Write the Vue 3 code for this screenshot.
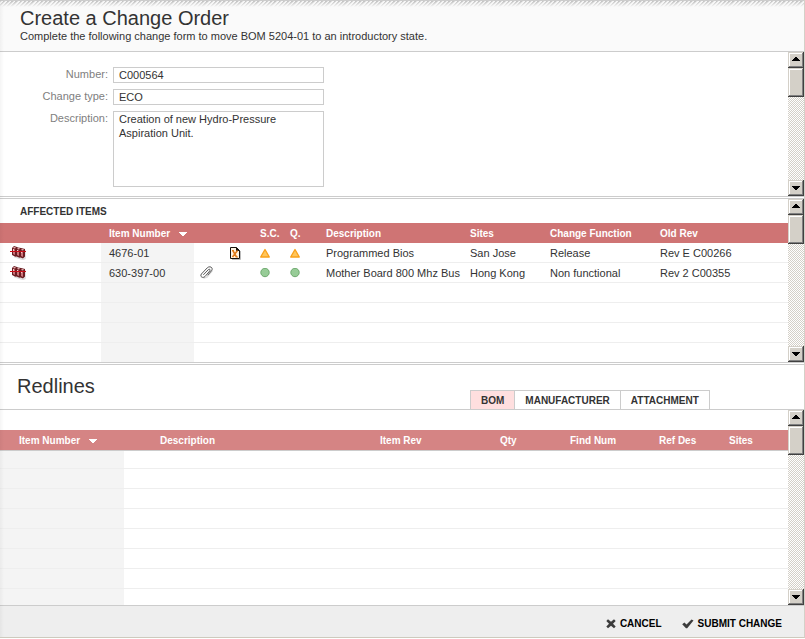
<script setup>
import { ref, h } from 'vue'

const number = ref('C000564')
const changeType = ref('ECO')
const description = ref('Creation of new Hydro-Pressure Aspiration Unit.')

const items = [
  { number: '4676-01', file: true, status: 'warn', description: 'Programmed Bios', site: 'San Jose', fn: 'Release', rev: 'Rev E C00266' },
  { number: '630-397-00', clip: true, status: 'ok', description: 'Mother Board 800 Mhz Bus', site: 'Hong Kong', fn: 'Non functional', rev: 'Rev 2 C00355' },
]
const tabs = ['BOM', 'MANUFACTURER', 'ATTACHMENT']
const activeTab = ref('BOM')

const Arrow = (props) =>
  h('svg', { width: 8, height: 4, viewBox: '0 0 8 4', 'shape-rendering': 'crispEdges', 'aria-hidden': 'true' }, [
    h('path', { d: props.up ? 'M3 0h2v1h1v1h1v1h1v1h-8v-1h1v-1h1v-1h1z' : 'M0 0h8v1h-1v1h-1v1h-1v1h-2v-1h-1v-1h-1v-1h-1z' }),
  ])
Arrow.props = { up: Boolean }

const StatusMark = (props) =>
  h('svg', { width: 10, height: 10, viewBox: '0 0 10 10', 'aria-hidden': 'true' }, [
    props.kind === 'warn'
      ? h('path', { d: 'M5 1.500L9.300 9H.7Z', fill: '#ffc65c', stroke: '#f9a11b', 'stroke-width': 1.3, 'stroke-linejoin': 'round' })
      : h('circle', { cx: 5, cy: 4.5, r: 4.2, fill: '#97cc97', stroke: '#6fa96f' }),
  ])
StatusMark.props = { kind: String }
</script>

<template>
  <main class="page">
    <header class="top">
      <h1>Create a Change Order</h1>
      <p>Complete the following change form to move BOM 5204-01 to an introductory state.</p>
    </header>

    <section class="panel">
      <form class="form" @submit.prevent>
        <label for="number">Number:</label>
        <input id="number" v-model="number" type="text">
        <label for="type">Change type:</label>
        <input id="type" v-model="changeType" type="text">
        <label for="desc">Description:</label>
        <textarea id="desc" v-model="description"></textarea>
      </form>
      <div class="scroll">
        <button type="button" aria-label="Scroll up"><Arrow up /></button>
        <div class="thumb"></div>
        <button type="button" class="down" aria-label="Scroll down"><Arrow /></button>
      </div>
    </section>

    <div class="divider"></div>

    <section class="panel">
      <div class="content">
        <h2 class="caption">AFFECTED ITEMS</h2>
        <table class="affected">
          <colgroup>
            <col class="a-kind"><col class="a-num"><col class="a-clip"><col class="a-file"><col class="a-sc"><col class="a-q">
            <col class="a-desc"><col class="a-site"><col class="a-fn"><col>
          </colgroup>
          <thead>
            <tr>
              <th></th>
              <th>Item Number <Arrow class="sort" /></th>
              <th></th>
              <th></th>
              <th>S.C.</th>
              <th>Q.</th>
              <th>Description</th>
              <th>Sites</th>
              <th>Change Function</th>
              <th>Old Rev</th>
            </tr>
          </thead>
          <tbody>
            <tr v-for="item in items" :key="item.number">
              <td class="kind">
                <svg width="17" height="15" viewBox="0 0 17 15" aria-hidden="true">
                  <path d="M4 11.500l9 3 2-1V5" fill="none" stroke="#ddd" stroke-width="1.500" />
                  <path d="M2 3l2-2 3 1 1 .5L11 3l4 1v7.500l-2 2-2.500-1-1 .3L6.500 11.500l-1 .3L2 10z" fill="#6b1d22" />
                  <path d="M3 4l2 .5V10l-2-1zM7 5l2 .5V11l-2-1zM11 6l2 .5V12l-2-1z" fill="#c9747a" />
                  <path d="M3 3l1-1 2 .5-1 1zM7 4l1-1 2 .5-1 1zM11 5l1-1 2 .5-1 1z" fill="#efb9b9" />
                  <path d="M3 4h1v2h-1zM7 5h1v1h-1zM11 7h1v1h-1z" fill="#f3caca" />
                  <path d="M0 6h16v1h-16z" fill="#c90d16" />
                </svg>
              </td>
              <td class="num">{{ item.number }}</td>
              <td class="clip">
                <svg v-if="item.clip" width="14" height="13" viewBox="0 0 14 13" fill="none" stroke-linecap="round" aria-hidden="true">
                  <path d="M4 12l3-1 5-6" stroke="#ddd" stroke-width="1.500" />
                  <path d="M3.600 8.600L8.400 3.600c1.200-1 2.300.1 1.400 1.300L5 10.500c-2.200 2.100-5.400.2-3.600-2.500L7.300 1.800c2.600-2.400 6.300-.1 4.300 2.800L8 8.900" stroke="#444" stroke-width=".9" />
                </svg>
              </td>
              <td>
                <svg v-if="item.file" width="13" height="14" viewBox="0 0 13 14" aria-hidden="true">
                  <path d="M3 13.500h8.500V5" fill="none" stroke="#bbb" />
                  <path d="M1.500 1.500h6l3 3v8h-9z" fill="#fff4e2" stroke="#17120b" />
                  <path d="M7 1v4h4l-4-4z" fill="#17120b" />
                  <path d="M3.800 4.500L7.500 11M8.500 4.500L3.500 11" stroke="#e07c1a" stroke-width="1.600" />
                  <path d="M3 4.500h2M7 11h2" stroke="#e07c1a" />
                </svg>
              </td>
              <td><StatusMark :kind="item.status" /></td>
              <td><StatusMark :kind="item.status" /></td>
              <td>{{ item.description }}</td>
              <td>{{ item.site }}</td>
              <td>{{ item.fn }}</td>
              <td>{{ item.rev }}</td>
            </tr>
            <tr v-for="n in 4" :key="n">
              <td></td>
              <td class="num"></td>
              <td v-for="c in 8" :key="c"></td>
            </tr>
          </tbody>
        </table>
      </div>
      <div class="scroll">
        <button type="button" aria-label="Scroll up"><Arrow up /></button>
        <div class="thumb"></div>
        <button type="button" class="down" aria-label="Scroll down"><Arrow /></button>
      </div>
    </section>

    <div class="divider"></div>

    <div class="redhead">
      <h2>Redlines</h2>
      <nav class="tabs">
        <button v-for="t in tabs" :key="t" type="button" :class="{ active: t === activeTab }" @click="activeTab = t">{{ t }}</button>
      </nav>
    </div>

    <section class="panel grow">
      <div class="content">
        <table class="redlines">
          <colgroup>
            <col class="r-num"><col class="r-desc"><col class="r-rev"><col class="r-qty"><col class="r-find"><col class="r-ref"><col>
          </colgroup>
          <thead>
            <tr>
              <th>Item Number <Arrow class="sort" /></th>
              <th class="desc">Description</th>
              <th>Item Rev</th>
              <th>Qty</th>
              <th>Find Num</th>
              <th>Ref Des</th>
              <th>Sites</th>
            </tr>
          </thead>
          <tbody>
            <tr v-for="n in 8" :key="n">
              <td class="num"></td>
              <td v-for="c in 6" :key="c"></td>
            </tr>
          </tbody>
        </table>
      </div>
      <div class="scroll">
        <button type="button" aria-label="Scroll up"><Arrow up /></button>
        <div class="thumb"></div>
        <button type="button" class="down" aria-label="Scroll down"><Arrow /></button>
      </div>
    </section>

    <footer class="actions">
      <button type="button">
        <svg width="10" height="10" viewBox="0 0 10 10" aria-hidden="true">
          <path d="M2 .3l3 2.500L8 .3 9.700 2 7 4.700l2.700 2.700L8 9.200 5 6.700 2 9.200.3 7.400 3 4.700.3 2z" fill="#3c3c3c" />
        </svg>
        CANCEL
      </button>
      <button type="button">
        <svg width="12" height="10" viewBox="0 0 12 10" aria-hidden="true">
          <path d="M.2 5.300L2.400 3.600 4.500 5.500 9.500.6l2 1L5.200 9.200H4z" fill="#3c3c3c" />
        </svg>
        SUBMIT CHANGE
      </button>
    </footer>
  </main>
</template>

<style>
body {
  background: #fff;
}
</style>

<style scoped>
* {
  box-sizing: border-box;
}

.page {
  position: relative;
  display: flex;
  flex-direction: column;
  min-height: calc(100vh - 1px);
  border-right: 1px solid #d4d0c8;
  border-bottom: 1px solid #cdcabd;
  font: 11px/14px "Liberation Sans", Arial, sans-serif;
  color: #333;
}

.page::before {
  content: "";
  position: absolute;
  inset: 0 auto 0 0;
  width: 4px;
  background: linear-gradient(90deg, rgba(0, 0, 0, 0.04), transparent);
  pointer-events: none;
}

h1,
h2,
p {
  margin: 0;
}

h1,
.redhead h2 {
  font-size: 20px;
  line-height: 22px;
  font-weight: 400;
}

.top {
  padding: 7px 20px 8px;
  border-bottom: 1px solid #ccc;
  background:
    linear-gradient(#ccc, #ccc) top / 100% 1px no-repeat,
    linear-gradient(rgba(250, 250, 250, 0), #fafafa 7px),
    repeating-linear-gradient(135deg, #b8b8b8 0 1px, #f4f4f4 2px 3px);
}

.panel {
  display: flex;
}

.grow {
  flex: 1;
}

.content {
  flex: 1;
  min-width: 0;
}

.form {
  flex: 1;
  display: grid;
  grid-template-columns: 108px 211px;
  column-gap: 5px;
  row-gap: 6px;
  align-content: start;
  padding: 15px 0 9px;
}

label {
  text-align: right;
  color: #808080;
}

input,
textarea {
  display: block;
  width: 100%;
  height: 16px;
  margin: 0;
  padding: 0 5px;
  border: 1px solid #ccc;
  border-radius: 0;
  background: #fff;
  color: #333;
  font: inherit;
  outline: none;
}

textarea {
  height: 76px;
  padding: 0 40px 0 5px;
  resize: none;
  overflow: hidden;
}

.scroll {
  display: flex;
  flex-direction: column;
  width: 16px;
  background: repeating-conic-gradient(#d4d0c8 0 25%, #fff 0 50%) 0 0 / 2px 2px;
}

.scroll button,
.thumb {
  flex: none;
  display: flex;
  align-items: center;
  justify-content: center;
  height: 16px;
  padding: 0 0 2px;
  border: 0;
  background: #d4d0c8;
  box-shadow: inset -1px -1px #404040, inset 1px 1px #d4d0c8, inset -2px -2px #808080, inset 2px 2px #fff;
}

.scroll .thumb {
  height: 29px;
}

.scroll .down {
  margin-top: auto;
  padding: 0;
}

.divider {
  height: 3px;
  border: solid #ccc;
  border-width: 1px 0;
}

.caption {
  padding: 6px 20px 4px;
  font-size: 10px;
  line-height: 14px;
  font-weight: 700;
}

table {
  width: 100%;
  table-layout: fixed;
  border-collapse: separate;
  border-spacing: 0;
}

th,
td {
  height: 20px;
  padding: 0 0 0 8px;
  text-align: left;
  white-space: nowrap;
  line-height: 18px;
}

th {
  padding-top: 2px;
  background: #cf7474;
  color: #fff;
  font-size: 10px;
}

td {
  border-bottom: 1px solid #eee;
}

td svg {
  display: block;
}

.num {
  background: #f4f4f4;
}

.kind {
  padding-left: 10px;
}

.clip {
  padding-left: 6px;
}

.sort {
  margin-left: 6px;
  vertical-align: 1px;
  fill: #fff;
}

.affected tbody tr:last-child td {
  height: 19px;
  border-bottom: 0;
}

.a-kind { width: 101px; }
.a-num { width: 93px; }
.a-clip { width: 27px; }
.a-file { width: 31px; }
.a-sc { width: 30px; }
.a-q { width: 36px; }
.a-desc { width: 144px; }
.a-site { width: 80px; }
.a-fn { width: 110px; }

.redhead {
  display: flex;
  align-items: flex-end;
  height: 45px;
  padding-left: 17px;
  border-bottom: 1px solid #ccc;
}

.redhead h2 {
  flex: 0 0 453px;
  padding-bottom: 12px;
}

.tabs {
  display: flex;
  border-left: 1px solid #ccc;
}

.tabs button {
  height: 19px;
  padding: 1px 10px 0;
  border: solid #ccc;
  border-width: 1px 1px 0 0;
  background: #fff;
  color: #333;
  font: 700 10px/14px "Liberation Sans", Arial, sans-serif;
}

.tabs .active {
  background: #ffdfdf;
}

.redlines {
  margin-top: 20px;
}

.redlines th {
  height: 21px;
  border-bottom: 1px solid #ccc;
  background: #d58484;
}

.redlines th:first-child {
  padding-left: 19px;
}

.redlines .desc {
  padding-left: 36px;
}

.redlines tbody tr:first-child td {
  height: 18px;
  line-height: 16px;
}

.redlines tbody tr:last-child td {
  height: 16px;
  border-bottom: 0;
}

.r-num { width: 124px; }
.r-desc { width: 248px; }
.r-rev { width: 120px; }
.r-qty { width: 70px; }
.r-find { width: 89px; }
.r-ref { width: 70px; }

.actions {
  display: flex;
  justify-content: flex-end;
  gap: 20px;
  padding: 11px 22px 6px;
  border-top: 1px solid #ccc;
  background: #eee;
}

.actions button {
  display: flex;
  align-items: center;
  gap: 4px;
  padding: 0;
  border: 0;
  background: none;
  color: #000;
  font: 700 10px/14px "Liberation Sans", Arial, sans-serif;
}
</style>
